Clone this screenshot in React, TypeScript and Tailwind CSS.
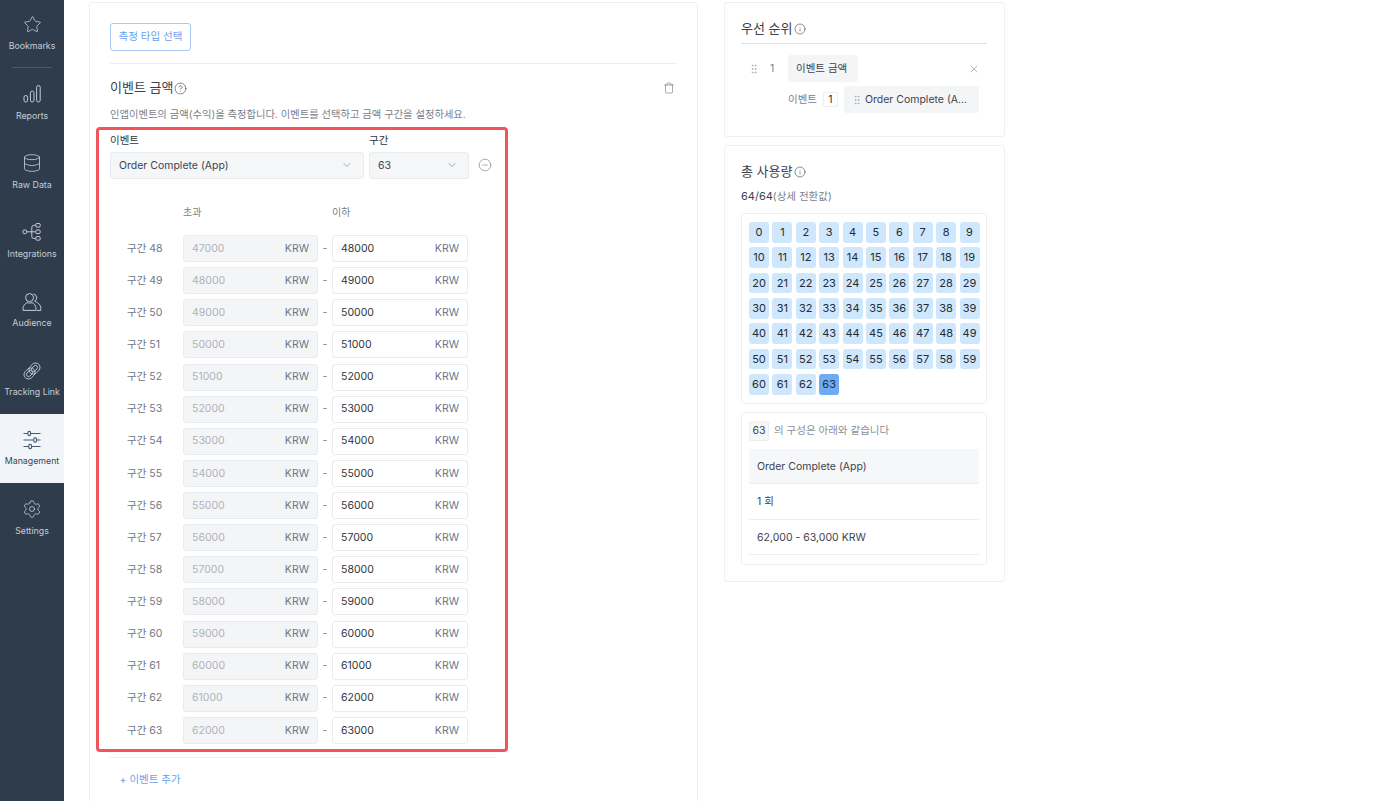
import React from 'react';
import { ChevronDown, CircleHelp, CircleMinus, Database, GripVertical, Info, Settings, Star, Trash, X } from 'lucide-react';

const FONT = 'font-[Inter,"Noto_Sans_CJK_KR",sans-serif]';

const ReportsIcon = () => (
  <svg width="20" height="20" viewBox="0 0 20 20" fill="none" stroke="currentColor" strokeWidth="1">
    <rect x="2" y="11.5" width="3.6" height="6.5" rx="1.8" />
    <rect x="8.4" y="7" width="3.6" height="11" rx="1.8" />
    <rect x="14.6" y="1.5" width="3.6" height="16.5" rx="1.8" />
  </svg>
);

const IntegrationsIcon = () => (
  <svg width="20" height="20" viewBox="0 0 20 20" fill="none" stroke="currentColor" strokeWidth="1">
    <rect x="1" y="8" width="3.6" height="3.6" rx="1" />
    <rect x="13.8" y="1.5" width="4.4" height="3.6" rx="1.2" />
    <rect x="13.8" y="8" width="4.4" height="3.6" rx="1.2" />
    <rect x="13.8" y="14.6" width="4.4" height="3.6" rx="1.2" />
    <path d="M4.6 9.8h9.2M13.8 3.3h-2a2 2 0 0 0-2 2v9.2a2 2 0 0 0 2 2h2" />
  </svg>
);

const AudienceIcon = () => (
  <svg width="20" height="20" viewBox="0 0 20 20" fill="none" stroke="currentColor" strokeWidth="1">
    <circle cx="7.6" cy="5.6" r="4" />
    <path d="M1 18.4v-1.6c0-3.2 2.2-5.4 4.2-6.2 1.5.7 3.3.7 4.8 0 2 .8 4 3 4 6.2v1.6z" />
    <path d="M11.6 1.9a4 4 0 0 1 1 7.4c2.7.9 6.2 3.3 6.2 7.2v1.9h-4" />
  </svg>
);

const TrackingLinkIcon = () => (
  <svg width="20" height="20" viewBox="0 0 20 20" fill="none" stroke="currentColor" strokeWidth="0.9">
    <g transform="rotate(-45 10 10)">
      <rect x="0.5" y="5.6" width="12" height="8.8" rx="4.4" />
      <rect x="7.5" y="5.6" width="12" height="8.8" rx="4.4" />
      <rect x="3" y="7.9" width="7" height="4.2" rx="2.1" />
      <rect x="10" y="7.9" width="7" height="4.2" rx="2.1" />
    </g>
  </svg>
);

const ManagementIcon = () => (
  <svg width="20" height="20" viewBox="0 0 20 20" fill="none" stroke="#4b5a70" strokeWidth="1.1">
    <path d="M1.5 3.5h4.4M8.6 3.5h9.9M1.5 10h10.2M14.6 10h3.9M1.5 16.5h5.2M9.6 16.5h8.9" />
    <rect x="5.9" y="1.4" width="2.7" height="4.2" rx="1.3" />
    <rect x="11.7" y="7.9" width="2.9" height="4.2" rx="1.3" />
    <rect x="6.7" y="14.4" width="2.9" height="4.2" rx="1.3" />
  </svg>
);

const NAV = [
  { label: 'Reports', icon: <ReportsIcon /> },
  { label: 'Raw Data', icon: <Database size={20} strokeWidth={1} /> },
  { label: 'Integrations', icon: <IntegrationsIcon /> },
  { label: 'Audience', icon: <AudienceIcon /> },
  { label: 'Tracking Link', icon: <TrackingLinkIcon /> },
  { label: 'Management', icon: <ManagementIcon />, active: true },
  { label: 'Settings', icon: <Settings size={20} strokeWidth={1} /> },
];

const Sidebar = () => (
  <aside className="w-16 shrink-0 bg-[#2f3c4c] text-[#c5ccd5] flex flex-col">
    <div className="h-[67px] flex flex-col items-center pt-[15px] gap-[5px]">
      <Star size={19} strokeWidth={1} />
      <span className="text-[8.8px] leading-[14px]">Bookmarks</span>
    </div>
    <div className="mx-3 h-px bg-[#4a5767]" />
    {NAV.map((item) => (
      <div
        key={item.label}
        className={`h-[69.2px] flex flex-col items-center pt-[15.5px] gap-[4px] ${item.active ? 'bg-[#f1f5f9] text-[#3a4656]' : ''}`}
      >
        <div className="h-[21px] flex items-center justify-center">{item.icon}</div>
        <span className="text-[8.8px] leading-[14px] whitespace-nowrap">{item.label}</span>
      </div>
    ))}
  </aside>
);

const SelectBox = ({ value, className }: { value: string; className: string }) => (
  <div className={`h-[27px] bg-[#f4f6f8] border border-[#e8ebef] rounded-[3px] flex items-center justify-between pl-2 pr-[10px] text-[10.5px] text-[#3d4450] ${className}`}>
    <span className="pt-px">{value}</span>
    <ChevronDown size={12} strokeWidth={1.2} className="text-[#6b7280]" />
  </div>
);

const ROWS = Array.from({ length: 16 }, (_, i) => 48 + i);

const RangeRow = ({ n }: { n: number }) => (
  <div className="flex items-center h-[27px] text-[10.5px]">
    <span className="w-[73px] pl-[17px] text-[#6f7782]">구간 {n}</span>
    <div className="w-[135px] h-[27px] bg-[#f4f5f7] border border-[#e8ebef] rounded-[3px] flex items-center justify-between px-2">
      <span className="text-[#aeb3ba]">{(n - 1) * 1000}</span>
      <span className="text-[#6f7782]">KRW</span>
    </div>
    <span className="w-[14px] text-center text-[#7b828c]">-</span>
    <div className="w-[136px] h-[27px] bg-white border border-[#e8ebef] rounded-[3px] flex items-center justify-between px-2">
      <span className="text-[#2f3640]">{n * 1000}</span>
      <span className="text-[#6f7782]">KRW</span>
    </div>
  </div>
);

const MainCard = () => (
  <section className="w-[609px] h-[830px] mt-[2px] ml-[25px] shrink-0 bg-white border border-[#eef0f3] rounded-[3px] px-5 pt-[19px]">
    <button className="h-[27.5px] w-[81px] border border-[#a9c7f5] rounded-[3px] text-[10.5px] text-[#6aa0ee]">측정 타입 선택</button>
    <div className="h-px bg-[#eceef1] mt-[12px]" />
    <div className="flex items-center justify-between mt-[17px] h-[15px]">
      <div className="flex items-center gap-px text-[13px] text-[#3b424d]">
        이벤트 금액 <CircleHelp size={13} strokeWidth={1.2} />
      </div>
      <Trash size={12} strokeWidth={1.2} className="text-[#6b7280] mr-[2px]" />
    </div>
    <p className="text-[10.3px] leading-[16px] text-[#7a818b] mt-[10px]">인앱이벤트의 금액(수익)을 측정합니다. 이벤트를 선택하고 금액 구간을 설정하세요.</p>
    <div className="relative -ml-[14px] mt-[5px] w-[412px] h-[625px] border-[3px] border-[#f2545b] rounded-[4px] pl-[11px] pt-[3px]">
      <div className="flex text-[10.5px] text-[#2f3640] h-[16px] items-center">
        <span className="w-[259px]">이벤트</span>
        <span>구간</span>
      </div>
      <div className="flex items-center gap-[5px] mt-[3px]">
        <SelectBox value="Order Complete (App)" className="w-[254px]" />
        <SelectBox value="63" className="w-[100px]" />
        <CircleMinus size={14} strokeWidth={1} className="ml-[4px] text-[#6b7280]" />
      </div>
      <div className="flex text-[10px] text-[#7a818b] mt-[26px] h-[16px] items-center">
        <span className="w-[73px]" />
        <span className="w-[149px]">초과</span>
        <span>이하</span>
      </div>
      <div className="mt-[14.4px] flex flex-col gap-[5.13px]">
        {ROWS.map((n) => <RangeRow key={n} n={n} />)}
      </div>
    </div>
    <div className="h-px bg-[#eceef1] mt-[5px] w-[386px]" />
    <div className="mt-[14px] ml-[9.5px] text-[10.5px] text-[#6aa0ee]">+ 이벤트 추가</div>
  </section>
);

const GripDots = () => <GripVertical size={12} strokeWidth={1.3} className="text-[#9aa1aa]" />;

const PriorityCard = () => (
  <section className="h-[135px] bg-white border border-[#eef0f3] rounded-[3px] pl-4 pr-[17px] pt-[18px]">
    <div className="flex items-center gap-px text-[13px] text-[#3b424d] h-[16px]">
      우선 순위 <Info size={12} strokeWidth={1.2} />
    </div>
    <div className="h-px bg-[#dfe2e7] mt-[6px]" />
    <div className="flex items-center mt-[11px] h-[27px] text-[10.5px]">
      <span className="ml-[7px] w-[22px]"><GripDots /></span>
      <span className="w-[18px] text-[#7a818b]">1</span>
      <span className="w-[70px] h-[27px] bg-[#f4f5f7] rounded-[3px] flex items-center pl-2 text-[#3d4450]">이벤트 금액</span>
      <X size={12} strokeWidth={1.1} className="ml-auto mr-[7px] text-[#7a818b]" />
    </div>
    <div className="flex items-center mt-[4px] h-[27px] text-[10.5px]">
      <span className="ml-[47px] w-[35px] text-[#7a818b]">이벤트</span>
      <span className="w-[15px] h-[15px] border border-[#eceef1] rounded-[2px] flex items-center justify-center text-[#2f3640]">1</span>
      <span className="ml-[6px] w-[135px] h-[27px] bg-[#f4f5f7] rounded-[3px] flex items-center pl-[7px] gap-[2px] text-[#3d4450]">
        <GripDots /> Order Complete (A...
      </span>
    </div>
  </section>
);

const CELLS = Array.from({ length: 64 }, (_, i) => i);

const UsageCard = () => (
  <section className="h-[437px] bg-white border border-[#eef0f3] rounded-[3px] pl-4 pr-[17px] pt-[18px]">
    <div className="flex items-center gap-px text-[13px] text-[#3b424d] h-[16px]">
      총 사용량 <Info size={12} strokeWidth={1.2} />
    </div>
    <div className="mt-[8px] text-[10.5px] leading-[16px] text-[#7a818b]">
      <span className="text-[11px] text-[#3d4450]">64/64</span>(상세 전환값)
    </div>
    <div className="mt-[8px] h-[191px] border border-[#eef0f3] rounded-[3px] pl-[7px] pt-[8px]">
      <div className="grid grid-cols-[repeat(10,20px)] gap-x-[3.4px] gap-y-[4.85px]">
        {CELLS.map((c) => (
          <span
            key={c}
            className={`h-[20.5px] rounded-[3px] flex items-center justify-center text-[11px] text-[#262b33] ${c === 63 ? 'bg-[#6fabf5]' : 'bg-[#cfe7fd]'}`}
          >
            {c}
          </span>
        ))}
      </div>
    </div>
    <div className="mt-[8px] h-[153px] border border-[#eef0f3] rounded-[3px] px-[7px] pt-[8px]">
      <div className="flex items-center gap-[5px] text-[10.5px] text-[#8a9099]">
        <span className="w-5 h-5 bg-[#f6f7f8] border border-[#eceef1] rounded-[2px] flex items-center justify-center text-[#3d4450]">63</span>
        의 구성은 아래와 같습니다
      </div>
      <div className="mt-[8px] text-[10.5px] text-[#3d4450]">
        <div className="h-[35px] bg-[#f6f7f9] border-b border-[#eceef1] flex items-center pl-2 pt-px">Order Complete (App)</div>
        <div className="h-[36px] border-b border-[#eceef1] flex items-center pl-2 pt-px">1 회</div>
        <div className="h-[35px] border-b border-[#eceef1] flex items-center pl-2 pt-px">62,000 - 63,000 KRW</div>
      </div>
    </div>
  </section>
);

export default function App() {
  return (
    <div className={`h-[801px] w-[1400px] overflow-hidden bg-white flex ${FONT}`}>
      <Sidebar />
      <MainCard />
      <div className="ml-[26px] mt-[2px] w-[281px] flex flex-col gap-[8px]">
        <PriorityCard />
        <UsageCard />
      </div>
    </div>
  );
}
